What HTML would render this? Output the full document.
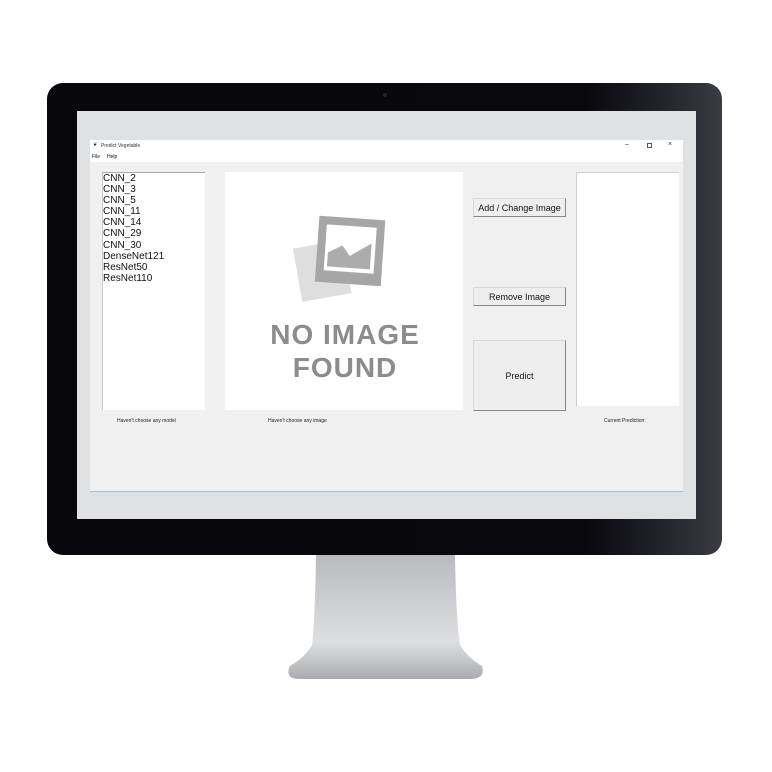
<!DOCTYPE html>
<html><head><meta charset="utf-8"><style>
*{margin:0;padding:0;box-sizing:border-box}
body{width:772px;height:772px;background:#fff;position:relative;overflow:hidden;font-family:"Liberation Sans",Arial,sans-serif}
.abs{position:absolute}
.mon{left:47px;top:83px;width:675px;height:472px;background:linear-gradient(90deg,#07070c 0%,#08080d 80%,#25262d 92%,#3a3b43 100%);border-radius:16px}
.scr{left:77px;top:111px;width:619px;height:408px;background:#dfe1e2}
.win{left:90px;top:140px;width:593px;height:352px;background:#f0f0f0;border-bottom:1px solid #9cc3e0}
.title{left:0;top:0;width:593px;height:11px;background:#fff;font-size:5px;color:#333}
.menu{left:0;top:11px;width:593px;height:11px;background:#fff;font-size:5px;color:#111}
.white{background:#fff}
.btn{background:#eeeeee;border:1px solid #d8d8d8;border-right:1px solid #888;border-bottom:1px solid #888;font-size:9px;color:#111;display:flex;align-items:center;justify-content:center}
.lst{font-size:10px;line-height:11.1px;color:#111;padding:0 0 0 0}
.lbl{font-size:5px;color:#222}
</style></head><body>
<svg class="abs" style="left:0;top:0" width="772" height="772">
<defs><linearGradient id="g" x1="0" y1="0" x2="0" y2="1"><stop offset="0" stop-color="#b8babd"/><stop offset="0.3" stop-color="#c8cacd"/><stop offset="0.7" stop-color="#dcdee0"/><stop offset="0.85" stop-color="#c4c6c9"/><stop offset="1" stop-color="#a9abae"/></linearGradient></defs>
<path d="M316 555 L455 555 Q456 620 460 645 Q468 658 482 666 Q486 679 470 679 L300 679 Q284 679 290 666 Q304 658 312 645 Q315 620 316 555Z" fill="url(#g)"/>
</svg>
<div class="abs mon"></div>
<div class="abs" style="left:383px;top:93px;width:4px;height:4px;border-radius:50%;background:#222"></div>
<div class="abs scr"></div>
<div class="abs win">
 <div class="abs title"><span style="position:absolute;left:3px;top:2px;color:#234">&#10086;</span><span style="position:absolute;left:11px;top:3px">Predict Vegetable</span>
  <span style="position:absolute;left:535px;top:1px;font-size:7px">–</span>
  <span style="position:absolute;left:557px;top:3px;width:5px;height:5px;border:1px solid #555"></span>
  <span style="position:absolute;left:578px;top:1px;font-size:7px">×</span></div>
 <div class="abs menu"><span style="position:absolute;left:2px;top:3px">File</span><span style="position:absolute;left:17px;top:3px">Help</span></div>
 <div class="abs white lst" style="left:12px;top:32px;width:103px;height:238px;border-top:1px solid #aaa;border-left:1px solid #ccc">CNN_2<br>CNN_3<br>CNN_5<br>CNN_11<br>CNN_14<br>CNN_29<br>CNN_30<br>DenseNet121<br>ResNet50<br>ResNet110</div>
 <div class="abs white" style="left:135px;top:32px;width:238px;height:238px">
  <svg width="238" height="238">
   <g transform="rotate(-10 50 90)"><rect x="70" y="80" width="50" height="54" fill="#dedede"/></g>
   <g transform="rotate(4 125 80)"><rect x="92" y="46" width="66" height="66" fill="#a6a6a6"/><rect x="100" y="54" width="50" height="46" fill="#fff"/><path d="M103 96 L103 82 L117 74 L125 84 L146 70 L146 96Z" fill="#acacac"/></g>
   <text x="120" y="172" text-anchor="middle" font-family="Liberation Sans,sans-serif" font-weight="bold" font-size="28" letter-spacing="1" fill="#8c8c8c">NO IMAGE</text>
   <text x="120" y="205" text-anchor="middle" font-family="Liberation Sans,sans-serif" font-weight="bold" font-size="28" letter-spacing="1" fill="#8c8c8c">FOUND</text>
  </svg>
 </div>
 <div class="abs btn" style="left:383px;top:58px;width:93px;height:19px">Add / Change Image</div>
 <div class="abs btn" style="left:383px;top:147px;width:93px;height:19px">Remove Image</div>
 <div class="abs btn" style="left:383px;top:200px;width:93px;height:71px">Predict</div>
 <div class="abs white" style="left:486px;top:32px;width:103px;height:234px;border-top:1px solid #ccc;border-left:1px solid #ccc"></div>
 <div class="abs lbl" style="left:27px;top:278px">Haven't choose any model</div>
 <div class="abs lbl" style="left:178px;top:278px">Haven't choose any image</div>
 <div class="abs lbl" style="left:514px;top:278px">Current Prediction:</div>
</div>
</body></html>
